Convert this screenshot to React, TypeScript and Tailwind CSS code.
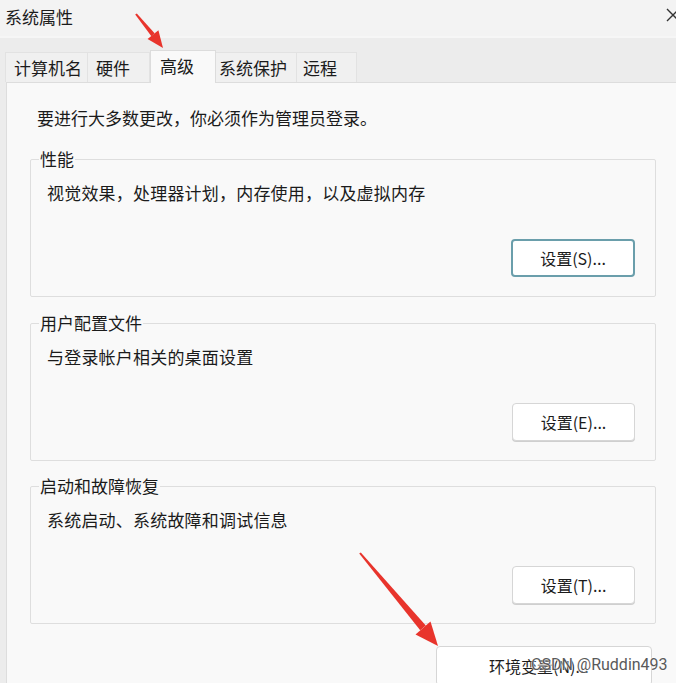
import React from "react";

const FONT = { fontFamily: '"Noto Sans CJK SC", "Noto Sans", sans-serif' };

function Tab({ label, w, pl, selected }: { label: string; w: number; pl: number; selected?: boolean }) {
  return (
    <div
      className={
        selected
          ? "h-[33px] bg-[#f9f9f9] border border-b-0 border-[#dcdcdc] flex items-center -mb-px relative z-10"
          : "h-[30px] bg-[#f0f0f0] border border-b-0 border-l-0 border-[#e2e2e2] flex items-center first:border-l"
      }
      style={{ width: w, paddingLeft: pl }}
    >
      <span className={selected ? "leading-none -mt-[3px]" : "leading-none"}>{label}</span>
    </div>
  );
}

function Group({
  legend,
  desc,
  btn,
  mt,
  focused,
}: {
  legend: string;
  desc: string;
  btn: string;
  mt: string;
  focused?: boolean;
}) {
  return (
    <fieldset className={`${mt} ml-[23px] w-[626px] border border-[#dedede] rounded-[2px] pl-[8px] pr-[20px] pb-[19px] flex flex-col`}>
      <legend className="px-[1px] leading-[22px] text-[17px]">{legend}</legend>
      <div className="mt-[12px] ml-[8px] leading-[22px] text-[17px] tracking-[0.2px]">{desc}</div>
      <div className="mt-[35px] flex justify-end">
        <div
          className={
            focused
              ? "w-[124px] h-[38px] bg-white rounded-[4px] border-2 border-[#6a9eab] flex items-center justify-center text-[16px]"
              : "w-[123px] h-[38px] bg-white rounded-[4px] border border-[#d6d6d6] shadow-[0_1px_0_#cfcfcf] flex items-center justify-center text-[16px]"
          }
        >
          {btn}
        </div>
      </div>
    </fieldset>
  );
}

export default function App() {
  return (
    <div className="w-[676px] h-[683px] bg-[#ececec] relative overflow-hidden text-[#1b1b1b]" style={FONT}>
      {/* title bar */}
      <div className="h-[38px] bg-[#f3f3f3] flex items-center justify-between pl-[5px] border-b-2 border-[#f6f6f6]">
        <span className="text-[17px] leading-none -mt-[4px]">系统属性</span>
        <svg width="14" height="14" viewBox="0 0 14 14" className="mr-[-4px] -mt-[6px]">
          <path d="M1 1 L13 13 M13 1 L1 13" stroke="#333" strokeWidth="1.4" />
        </svg>
      </div>
      {/* tab strip */}
      <div className="h-[44px] flex items-end pl-[5px] text-[17px]">
        <Tab label="计算机名" w={83} pl={8} />
        <Tab label="硬件" w={62} pl={8} />
        <Tab label="高级" w={66} pl={9} selected />
        <Tab label="系统保护" w={81} pl={3} />
        <Tab label="远程" w={60} pl={6} />
      </div>
      {/* content panel */}
      <div className="ml-[6px] h-[620px] bg-[#f9f9f9] border-l border-t border-[#dddddd] flex flex-col">
        <div className="mt-[24px] ml-[30px] text-[17px] leading-[22px]">要进行大多数更改，你必须作为管理员登录。</div>
        <Group mt="mt-[19px]" legend="性能" desc="视觉效果，处理器计划，内存使用，以及虚拟内存" btn="设置(S)..." focused />
        <Group mt="mt-[15px]" legend="用户配置文件" desc="与登录帐户相关的桌面设置" btn="设置(E)..." />
        <Group mt="mt-[14px]" legend="启动和故障恢复" desc="系统启动、系统故障和调试信息" btn="设置(T)..." />
        <div className="mt-[22px] ml-[429px] w-[216px] h-[40px] bg-white rounded-[4px] border border-[#d6d6d6] flex items-center pl-[52px] text-[16px]">
          环境变量(N)...
        </div>
      </div>

      {/* watermark */}
      <div
        className="absolute left-[531px] top-[657px] text-[16px] text-[#5a5a5a] leading-none"
        style={{ fontFamily: 'Roboto, "Liberation Sans", sans-serif', textShadow: "0 0 2px #fff, 0 0 2px #fff" }}
      >
        CSDN @Ruddin493
      </div>

      {/* red arrows */}
      <svg className="absolute inset-0 pointer-events-none" width="676" height="683" viewBox="0 0 676 683">
        <polygon points="135.2,14.6 136.8,13.4 154.6,33.2 151.4,36.2" fill="#e8342c" />
        <polygon points="163,48 158.4,30.3 147.6,39.1" fill="#e8342c" />
        <polygon points="359.2,553.6 360.8,552.4 425.8,625.5 420.2,630.2" fill="#e8342c" />
        <polygon points="438,646 430.5,621.5 415.5,634.5" fill="#e8342c" />
      </svg>
    </div>
  );
}
